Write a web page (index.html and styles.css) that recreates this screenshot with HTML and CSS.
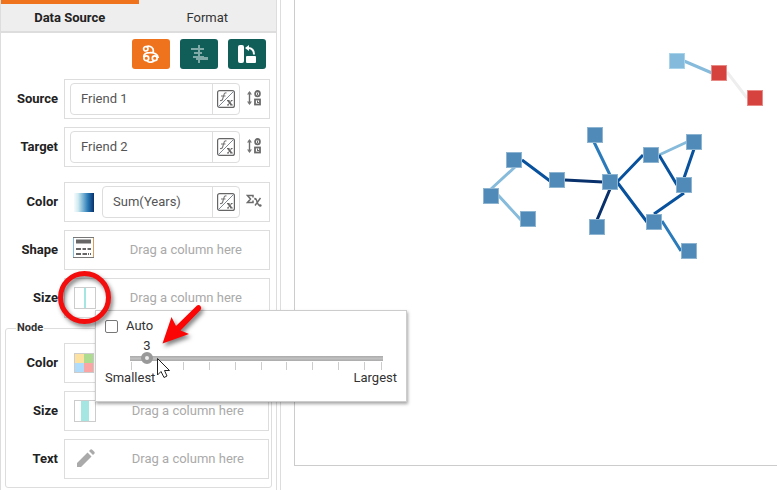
FILE: index.html
```html
<!DOCTYPE html>
<html lang="en">
<head>
<meta charset="utf-8">
<title>Network chart editor</title>
<link rel="stylesheet" href="styles.css">
</head>
<body>
<svg class="defs" aria-hidden="true">
  <symbol id="fx" viewBox="0 0 18 18">
    <rect x=".6" y=".6" width="16.800" height="16.800" rx="2" fill="#fff" stroke="#666" stroke-width="1.2"/>
    <path d="M1.500 16.500L16.500 1.500" stroke="#7d8894" stroke-width="1"/>
    <path d="M9.500 3C8 2.600 7.3 3.300 7 4.500L5.500 9.500C5.200 10.500 4.500 10.800 3 10.500M4 6H8.500" fill="none" stroke="#777" stroke-width="1.1"/>
    <path d="M11 10.500L14.500 15" stroke="#666" stroke-width="1.8"/><path d="M14.800 10.500L10.800 15M10 10.500H12.500M13.800 10.500H15.500M10 15H12M13.500 15H15.800" stroke="#666"/>
  </symbol>
  <symbol id="sort" viewBox="0 0 16 16">
    <path d="M3.500 2V14" stroke="#6b6b6b" stroke-width="1.400"/><path d="M1 4.500L3.500 1L6 4.500ZM1 11.500L3.500 15L6 11.500Z" fill="#777"/>
    <ellipse cx="11.5" cy="3.700" rx="2.400" ry="2.700" fill="#fff" stroke="#6b6b6b" stroke-width="1.800"/><path d="M11.500 2.500V5" stroke="#6b6b6b"/>
    <rect x="9" y="9.500" width="5" height="5" fill="#fff" stroke="#6b6b6b" stroke-width="1.800"/><path d="M11.500 10.500V13M11 12.500H13" stroke="#6b6b6b"/>
  </symbol>
</svg>
<div class="app">
  <aside class="sidebar">
    <nav class="tabs">
      <button class="tab tab-active">Data Source</button>
      <button class="tab">Format</button>
    </nav>
    <div class="tools">
      <button class="tool tool-on" aria-label="Network graph">
        <svg width="18" height="18" viewBox="0 0 18 18" fill="none" stroke="#fff" stroke-width="1.7"><circle cx="3.800" cy="3.800" r="2.200"/><circle cx="4.300" cy="13.300" r="2.400"/><circle cx="12.700" cy="13.300" r="2.400"/><path d="M4.500 1.500C8.500 0 12.500 3.500 11 7.700M1.800 12C1.500 9 4 7.700 8 7.700C12.500 7.500 16.300 9.500 16.300 13M5 15.800C7 17.500 10 17.500 12.300 15.800"/></svg>
      </button>
      <button class="tool" aria-label="Center align">
        <svg width="18" height="18" viewBox="0 0 18 18" fill="#80aaa7"><path d="M8 0h2v18H8zM1 3h13v2H1zM4 7h8v2H4zM3 11h11v2H3zM6 12h12v3H6z"/></svg>
      </button>
      <button class="tool" aria-label="Swap axes">
        <svg width="18" height="18" viewBox="0 0 18 18"><rect x="0" y="0" width="6" height="18" rx="2" fill="#fff"/><rect x="8" y="11" width="10" height="7" rx="1" fill="#fff"/><path d="M10 3C14 3 16 5.5 16 9.5" fill="none" stroke="#fff" stroke-width="2"/><path d="M7 3L11 0V6Z" fill="#fff"/></svg>
      </button>
    </div>
    <div class="rows">
      <div class="row">
        <label for="source">Source</label>
        <div class="box">
          <div class="field"><input id="source" type="text" value="Friend 1"><button aria-label="Edit source formula"><svg width="18" height="18"><use href="#fx"/></svg></button></div>
          <button class="side" aria-label="Sort source"><svg width="16" height="16"><use href="#sort"/></svg></button>
        </div>
      </div>
      <div class="row">
        <label for="target">Target</label>
        <div class="box">
          <div class="field"><input id="target" type="text" value="Friend 2"><button aria-label="Edit target formula"><svg width="18" height="18"><use href="#fx"/></svg></button></div>
          <button class="side" aria-label="Sort target"><svg width="16" height="16"><use href="#sort"/></svg></button>
        </div>
      </div>
      <div class="row row-spaced">
        <label for="color">Color</label>
        <div class="box">
          <button class="swatch gradient" aria-label="Color palette"></button>
          <div class="field"><input id="color" type="text" value="Sum(Years)"><button aria-label="Edit color formula"><svg width="18" height="18"><use href="#fx"/></svg></button></div>
          <button class="side" aria-label="Aggregate"><svg width="16" height="16" viewBox="0 0 16 16" fill="none" stroke="#6b6b6b"><path d="M7 4.500V2.500H1.500L4.500 6L1.500 9.500H7V7.500" stroke-width="1.5"/><path d="M8.500 5.500C11 4.500 11 13 14 12.500M14.500 5L9 12.500" stroke-width="1.4"/><circle cx="9.300" cy="6" r="1" fill="#6b6b6b" stroke="none"/><circle cx="14.300" cy="12.500" r="1.300" fill="#6b6b6b" stroke="none"/></svg></button>
        </div>
      </div>
      <div class="row">
        <span class="name">Shape</span>
        <div class="box drop">
          <button class="swatch shape" aria-label="Shape"><svg width="21" height="21" viewBox="0 0 21 21"><rect x=".5" y=".5" width="20" height="20" fill="#fff" stroke="#777"/><path d="M.5 1V20" stroke="#7fbbe8"/><path d="M20.5 1V20" stroke="#dc9a5e"/><path d="M3 4.5H18" stroke="#666" stroke-width="4"/><path d="M3 12H8M9.5 12H13M14.5 12H18M3 17H8M9.5 17H14M15 17H16M17 17H18" stroke="#666" stroke-width="2"/></svg></button>
          <span class="hint">Drag a column here</span>
        </div>
      </div>
      <div class="row">
        <span class="name">Size</span>
        <div class="box drop">
          <button class="swatch size thin" aria-label="Edge size"></button>
          <span class="hint">Drag a column here</span>
        </div>
      </div>
    </div>
    <fieldset class="node">
      <legend>Node</legend>
      <div class="row">
        <span class="name">Color</span>
        <div class="box drop"><button class="swatch palette" aria-label="Node color"></button><span class="hint">Drag a column here</span></div>
      </div>
      <div class="row">
        <span class="name">Size</span>
        <div class="box drop"><button class="swatch size" aria-label="Node size"></button><span class="hint">Drag a column here</span></div>
      </div>
      <div class="row">
        <span class="name">Text</span>
        <div class="box drop"><button class="swatch plain" aria-label="Text format"><svg width="22" height="22" viewBox="0 0 22 22" fill="#aaa"><path d="M3 15L13.5 4.5L17.5 8.5L7 19H3ZM15 3L16.5 1.5Q17.5 1 18.5 2L20.5 4Q21 5 20.5 5.5L19 7Z"/></svg></button><span class="hint">Drag a column here</span></div>
      </div>
    </fieldset>
  </aside>
  <div class="splitter"></div>
  <main class="chart">
    <svg width="482" height="465" viewBox="295 0 482 465" role="img" aria-label="Friendship network">
      <g fill="none" stroke-width="3">
        <path stroke="#86bbdb" d="M515 167L491 189M498 195L521 220M659 155L687 142M684 61L712 73"/>
        <path stroke="#08519c" d="M522 160L550 181M643 155L617 182L647 222M659 155L677 185M694 149L684 178M684 193L654 214"/>
        <path stroke="#08306b" d="M565 180L603 182M610 189L597 220"/>
        <path stroke="#2b7bba" d="M594 142L610 175M662 221L681 251"/>
        <path stroke="#eee" d="M727 72L747 98"/>
      </g>
      <g fill="#4f8ab8" stroke="#8db5d1">
        <rect x="506.500" y="152.500" width="15" height="15"/><rect x="483.500" y="188.500" width="15" height="15"/><rect x="520.500" y="211.500" width="15" height="15"/><rect x="549.500" y="172.500" width="15" height="15"/><rect x="587.500" y="127.500" width="15" height="15"/><rect x="602.500" y="174.500" width="15" height="15"/><rect x="589.500" y="219.500" width="15" height="15"/><rect x="643.500" y="147.500" width="15" height="15"/><rect x="686.500" y="134.500" width="15" height="15"/><rect x="676.500" y="177.500" width="15" height="15"/><rect x="646.500" y="214.500" width="15" height="15"/><rect x="681.500" y="243.500" width="15" height="15"/>
      </g>
      <rect x="669.500" y="53.500" width="15" height="15" fill="#84bbdc" stroke="#a9d3e8"/>
      <g fill="#d6433f" stroke="#e88a86"><rect x="711.500" y="65.500" width="15" height="15"/><rect x="747.500" y="90.500" width="15" height="15"/></g>
    </svg>
  </main>
</div>
<section class="popup" aria-label="Size settings">
  <label class="auto"><input type="checkbox">Auto</label>
  <div class="scale">
    <output class="value" for="size">3</output>
    <input id="size" type="range" min="1" max="30" value="3" aria-label="Size">
    <svg class="ticks" width="253" height="8" aria-hidden="true"><path d="M1.500 0V8M27.500 0V8M53.500 0V8M79.500 0V8M105.500 0V8M131.500 0V8M156.500 0V8M182.500 0V8M208.500 0V8M234.500 0V8M251.500 0V8" stroke="#ccc" stroke-width="1"/></svg>
  </div>
  <div class="ends"><span>Smallest</span><span>Largest</span></div>
</section>
<svg class="marks" width="220" height="390" viewBox="0 0 220 390" aria-hidden="true">
  <g class="callout">
    <circle cx="84.500" cy="297.500" r="24" fill="none" stroke="#f40d0d" stroke-width="5"/>
    <path d="M162.500 343.500L171.500 317L176 326L197 305.500Q199 304.500 200.500 306Q202 308 200.500 310L180.500 330.500L189 334Z" fill="#fb0505"/>
  </g>
  <path d="M157.500 358.500V375L161 371.500L164 377.500L167 376L164.500 370.500H169.500Z" fill="#fff" stroke="#222"/>
</svg>
</body>
</html>
```
FILE: styles.css
```css
* { box-sizing: border-box; }
body {
  margin: 0;
  position: relative;
  font: 13px/16px Roboto, sans-serif;
  color: #333;
  background: #fff;
  overflow: hidden;
}
button {
  font: inherit;
  color: inherit;
  padding: 0;
  border: 0;
  background: none;
}
svg { display: block; }
.defs { position: absolute; width: 0; height: 0; }
.app { display: flex; min-height: 100vh; }

.sidebar {
  flex: 0 0 277px;
  min-width: 0;
  border: solid #ddd;
  border-width: 0 1px;
}
.tabs {
  display: flex;
  height: 33px;
  background: #eee;
  border-bottom: 2px solid #ddd;
}
.tab { flex: 1; border-top: 4px solid transparent; }
.tab-active { border-top-color: #ef731d; font-weight: 700; color: #222; }
.tools {
  display: flex;
  justify-content: flex-end;
  gap: 10px;
  padding: 6px 10px 10px;
}
.tool {
  display: grid;
  place-items: center;
  width: 38px;
  height: 30px;
  border-radius: 3px;
  background: #115e59;
}
.tool-on { background: #ef731d; }

.rows { padding-right: 6px; }
.row {
  display: grid;
  grid-template-columns: 57px minmax(0, 1fr);
  column-gap: 6px;
  align-items: center;
  margin-bottom: 8px;
}
.row-spaced { margin-top: 15px; }
.row > label, .name {
  text-align: right;
  font-weight: 700;
  color: #222;
}
.box {
  display: flex;
  align-items: center;
  height: 40px;
  padding: 0 5px;
  border: 1px solid #ddd;
}
.field {
  display: flex;
  flex: 1;
  min-width: 0;
  height: 32px;
  border: 1px solid #ddd;
  border-radius: 4px;
}
.field input {
  flex: 1;
  min-width: 0;
  padding: 0 10px;
  border: 0;
  background: none;
  font: inherit;
  color: #555;
}
.field button {
  display: grid;
  place-items: center;
  width: 27px;
  border-left: 1px solid #ddd;
}
.side { margin: 0 2px 2px 6px; }
.swatch {
  flex: none;
  width: 22px;
  height: 22px;
  margin: 0 8px 0 4px;
}
.gradient {
  width: 20px;
  height: 19px;
  background: linear-gradient(90deg, #f7fbff, #d2ebf0 20%, #7bb5d5 45%, #2878b4 70%, #08306b);
}
.shape { margin: 0 8px 6px 3px; }
.size {
  border: 1px solid #ccc;
  background: linear-gradient(#a5e6e3, #a5e6e3) center / 8px 100% no-repeat #fff;
}
.thin { background-size: 2px 100%; }
.palette {
  width: 20px;
  height: 20px;
  border: 1px solid #ccc;
  background: conic-gradient(#addc91 25%, #fca5a5 0 50%, #aedcfa 0 75%, #fde1a0 0);
}
.drop { padding-right: 27px; }
.hint { flex: 1; text-align: right; color: #aaa; white-space: nowrap; }

.node {
  min-width: 0;
  margin: -6px 4px 0;
  padding: 6px 2px 0 0;
  border: 1px solid #ddd;
  border-radius: 3px;
}
.node legend {
  height: 17px;
  margin-left: 10px;
  padding: 0 1px;
  font-size: 11px;
  font-weight: 700;
}
.node .row { grid-template-columns: 52px minmax(0, 1fr); }
.node .drop { padding-right: 24px; }

.splitter { flex: 0 0 4px; border-right: 1px solid #ddd; }
.chart {
  flex: 1;
  min-width: 0;
  height: calc(100vh - 24px);
  margin-left: 13px;
  border: solid #ccc;
  border-width: 0 0 1px 1px;
  overflow: hidden;
}

.popup {
  position: absolute;
  left: 95px;
  top: 310px;
  width: 312px;
  padding: 7px 9px 15px;
  border: 1px solid #ccc;
  background: #fff;
  box-shadow: 1px 2px 3px rgba(0, 0, 0, .35);
}
.auto { display: flex; align-items: center; gap: 8px; }
.auto input {
  appearance: none;
  width: 13px;
  height: 13px;
  margin: 0;
  border: 1px solid #777;
  border-radius: 2px;
}
.scale { padding: 4px 14px 0 25px; }
.value { display: block; width: 34px; text-align: center; }
.scale input {
  appearance: none;
  position: relative;
  display: block;
  width: calc(100% + 12px);
  height: 12px;
  margin: -2px -6px 0;
  background: linear-gradient(#aaa, #c0c0c0 50%, #aaa) center / calc(100% - 12px) 5px no-repeat;
}
.scale input::-webkit-slider-thumb {
  appearance: none;
  width: 12px;
  height: 12px;
  border: 4px solid #999;
  border-radius: 50%;
  background: #eee;
}
.ticks { margin-top: -2px; }
.ends { display: flex; justify-content: space-between; }

.marks { position: absolute; left: 0; top: 0; pointer-events: none; }
.callout { filter: drop-shadow(2px 3px 2px rgba(0, 0, 0, .5)); }
```
